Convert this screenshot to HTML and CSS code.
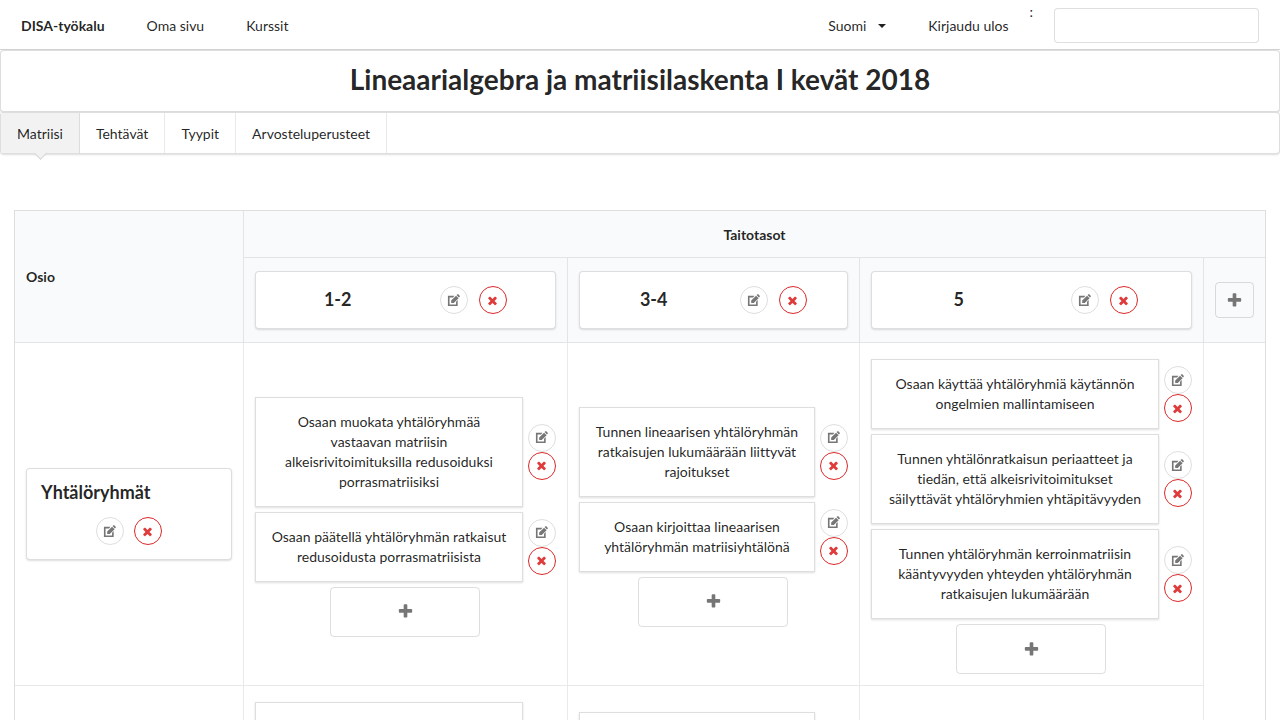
FILE: index.html
```html
<!DOCTYPE html>
<html lang="fi">
<head>
<meta charset="utf-8">
<title>DISA-työkalu</title>
<link rel="stylesheet" href="styles.css">
</head>
<body>
<svg class="sprite" aria-hidden="true">
  <symbol id="edit" viewBox="0 0 28 28"><path d="M2 4h14l-3 3.500H5.500v15h14v-6l3.500-3.500v13H2z"/><path d="M9 19.500v-5.500L19.500 3.500l5.500 5.500-10.500 10.500zM20.600 2.400l1.700-1.700q1-.8 2 0l3 3q.8 1 0 2l-1.700 1.700z"/></symbol>
  <symbol id="close" viewBox="0 0 1792 1792"><path d="M1490 1322q0 40-28 68l-136 136q-28 28-68 28t-68-28l-294-294-294 294q-28 28-68 28t-68-28l-136-136q-28-28-28-68t28-68l294-294-294-294q-28-28-28-68t28-68l136-136q28-28 68-28t68 28l294 294 294-294q28-28 68-28t68 28l136 136q28 28 28 68t-28 68l-294 294 294 294q28 28 28 68z"/></symbol>
  <symbol id="plus" viewBox="0 0 1792 1792"><path d="M1600 736v192q0 40-28 68t-68 28h-416v416q0 40-28 68t-68 28h-192q-40 0-68-28t-28-68v-416h-416q-40 0-68-28t-28-68v-192q0-40 28-68t68-28h416v-416q0-40 28-68t68-28h192q40 0 68 28t28 68v416h416q40 0 68 28t28 68z"/></symbol>
</svg>

<nav class="navbar">
  <a class="nav-item brand" href="#">DISA-työkalu</a>
  <a class="nav-item" href="#">Oma sivu</a>
  <a class="nav-item" href="#">Kurssit</a>
  <div class="nav-right">
    <button class="nav-item language" type="button">Suomi <svg class="caret" viewBox="0 0 8 4" aria-hidden="true"><path d="M0 0h8L4 4z"/></svg></button>
    <a class="nav-item" href="#">Kirjaudu ulos</a>
    <label class="user-label" for="user">:</label>
    <input class="user-input" id="user" type="text">
  </div>
</nav>

<header class="title-bar"><h1>Lineaarialgebra ja matriisilaskenta I kevät 2018</h1></header>

<nav class="tabs">
  <a class="tab active" href="#">Matriisi</a>
  <a class="tab" href="#">Tehtävät</a>
  <a class="tab" href="#">Tyypit</a>
  <a class="tab" href="#">Arvosteluperusteet</a>
</nav>

<main class="matrix-wrap">
<table class="matrix">
  <colgroup><col class="col-part"><col class="col-low"><col class="col-mid"><col class="col-high"><col class="col-add"></colgroup>
  <thead>
    <tr>
      <th class="part-head" rowspan="2">Osio</th>
      <th class="levels-head" colspan="4">Taitotasot</th>
    </tr>
    <tr>
      <th><div class="card level"><h3>1-2</h3><div class="actions"><button class="round" type="button" aria-label="Muokkaa"><svg><use href="#edit"/></svg></button><button class="round danger" type="button" aria-label="Poista"><svg><use href="#close"/></svg></button></div></div></th>
      <th><div class="card level"><h3>3-4</h3><div class="actions"><button class="round" type="button" aria-label="Muokkaa"><svg><use href="#edit"/></svg></button><button class="round danger" type="button" aria-label="Poista"><svg><use href="#close"/></svg></button></div></div></th>
      <th><div class="card level"><h3>5</h3><div class="actions"><button class="round" type="button" aria-label="Muokkaa"><svg><use href="#edit"/></svg></button><button class="round danger" type="button" aria-label="Poista"><svg><use href="#close"/></svg></button></div></div></th>
      <th><button class="add small" type="button" aria-label="Lisää"><svg><use href="#plus"/></svg></button></th>
    </tr>
  </thead>
  <tbody>
    <tr>
      <td><div class="card part"><h3>Yhtälöryhmät</h3><div class="actions"><button class="round" type="button" aria-label="Muokkaa"><svg><use href="#edit"/></svg></button><button class="round danger" type="button" aria-label="Poista"><svg><use href="#close"/></svg></button></div></div></td>
      <td>
        <div class="goal"><p class="goal-text">Osaan muokata yhtälöryhmää vastaavan matriisin alkeisrivitoimituksilla redusoiduksi porrasmatriisiksi</p><div class="stack"><button class="round" type="button" aria-label="Muokkaa"><svg><use href="#edit"/></svg></button><button class="round danger" type="button" aria-label="Poista"><svg><use href="#close"/></svg></button></div></div>
        <div class="goal"><p class="goal-text">Osaan päätellä yhtälöryhmän ratkaisut redusoidusta porrasmatriisista</p><div class="stack"><button class="round" type="button" aria-label="Muokkaa"><svg><use href="#edit"/></svg></button><button class="round danger" type="button" aria-label="Poista"><svg><use href="#close"/></svg></button></div></div>
        <button class="add" type="button" aria-label="Lisää"><svg><use href="#plus"/></svg></button>
      </td>
      <td>
        <div class="goal"><p class="goal-text">Tunnen lineaarisen yhtälöryhmän ratkaisujen lukumäärään liittyvät rajoitukset</p><div class="stack"><button class="round" type="button" aria-label="Muokkaa"><svg><use href="#edit"/></svg></button><button class="round danger" type="button" aria-label="Poista"><svg><use href="#close"/></svg></button></div></div>
        <div class="goal"><p class="goal-text">Osaan kirjoittaa lineaarisen yhtälöryhmän matriisiyhtälönä</p><div class="stack"><button class="round" type="button" aria-label="Muokkaa"><svg><use href="#edit"/></svg></button><button class="round danger" type="button" aria-label="Poista"><svg><use href="#close"/></svg></button></div></div>
        <button class="add" type="button" aria-label="Lisää"><svg><use href="#plus"/></svg></button>
      </td>
      <td>
        <div class="goal"><p class="goal-text">Osaan käyttää yhtälöryhmiä käytännön ongelmien mallintamiseen</p><div class="stack"><button class="round" type="button" aria-label="Muokkaa"><svg><use href="#edit"/></svg></button><button class="round danger" type="button" aria-label="Poista"><svg><use href="#close"/></svg></button></div></div>
        <div class="goal"><p class="goal-text">Tunnen yhtälönratkaisun periaatteet ja tiedän, että alkeisrivitoimitukset säilyttävät yhtälöryhmien yhtäpitävyyden</p><div class="stack"><button class="round" type="button" aria-label="Muokkaa"><svg><use href="#edit"/></svg></button><button class="round danger" type="button" aria-label="Poista"><svg><use href="#close"/></svg></button></div></div>
        <div class="goal"><p class="goal-text">Tunnen yhtälöryhmän kerroinmatriisin kääntyvyyden yhteyden yhtälöryhmän ratkaisujen lukumäärään</p><div class="stack"><button class="round" type="button" aria-label="Muokkaa"><svg><use href="#edit"/></svg></button><button class="round danger" type="button" aria-label="Poista"><svg><use href="#close"/></svg></button></div></div>
        <button class="add" type="button" aria-label="Lisää"><svg><use href="#plus"/></svg></button>
      </td>
      <td rowspan="2"></td>
    </tr>
    <tr>
      <td></td>
      <td><div class="goal"><div class="goal-text tall"></div><div class="stack spacer"></div></div></td>
      <td><div class="goal"><div class="goal-text"></div><div class="stack spacer"></div></div></td>
      <td></td>
    </tr>
  </tbody>
</table>
</main>
</body>
</html>
```
FILE: styles.css
```css
* { box-sizing: border-box; }

body {
  margin: 0;
  background: #fff;
  color: rgba(0, 0, 0, 0.87);
  font: 14px/20px Lato, "Liberation Sans", sans-serif;
  font-variant-ligatures: none;
}

h1, h3, p { margin: 0; }
a { color: inherit; text-decoration: none; }
button, input { font: inherit; color: inherit; }
button { cursor: pointer; }
.sprite { display: none; }

.navbar {
  display: flex;
  align-items: center;
  height: 50px;
  padding-top: 2px;
  border-bottom: 1px solid #d4d4d5;
}
.nav-item {
  padding: 0 21px;
  border: 0;
  background: none;
}
.brand { font-weight: 700; }
.nav-right {
  display: flex;
  align-items: center;
  align-self: stretch;
  margin-left: auto;
  padding-right: 21px;
}
.language { display: flex; align-items: center; gap: 12px; }
.caret { width: 8px; height: 4px; fill: currentColor; }
.user-label { align-self: flex-start; margin-right: 21px; }
.user-input {
  width: 205px;
  height: 35px;
  padding: 0 14px;
  border: 1px solid rgba(34, 36, 38, 0.15);
  border-radius: 4px;
  background: #fff;
}

.title-bar, .tabs, .card {
  border: 1px solid rgba(34, 36, 38, 0.15);
  border-radius: 4px;
  background: #fff;
  box-shadow: 0 1px 2px rgba(34, 36, 38, 0.15);
}
.title-bar { padding: 12px 14px 16px; text-align: center; }
h1 { font-size: 28px; line-height: 32px; }

.tabs { display: flex; height: 42px; }
.tab {
  position: relative;
  display: flex;
  align-items: center;
  padding: 2px 16px 0;
  border-right: 1px solid rgba(34, 36, 38, 0.1);
}
.tab.active { background: #f2f2f2; }
.tab.active::after {
  content: "";
  position: absolute;
  left: 50%;
  bottom: -5px;
  width: 8px;
  height: 8px;
  margin-left: -4px;
  transform: rotate(45deg);
  border: solid #d4d4d5;
  border-width: 0 1px 1px 0;
  background: #f2f2f2;
}

.matrix-wrap { padding: 56px 14px 14px; }
.matrix {
  width: 100%;
  table-layout: fixed;
  border: 1px solid rgba(34, 36, 38, 0.15);
  border-collapse: separate;
  border-spacing: 0;
  text-align: center;
}
.col-part { width: 18.24%; }
.col-low { width: 25.92%; }
.col-mid { width: 23.36%; }
.col-high { width: 27.52%; }
.col-add { width: 4.96%; }

th {
  padding: 13px 11px;
  border-bottom: 1px solid rgba(34, 36, 38, 0.1);
  border-left: 1px solid rgba(34, 36, 38, 0.1);
  background: #f9fafb;
}
td {
  padding: 11px;
  border-left: 1px solid rgba(34, 36, 38, 0.1);
  vertical-align: middle;
}
tr > .part-head, tbody td:first-child { border-left: 0; }
tbody tr + tr td { border-top: 1px solid rgba(34, 36, 38, 0.1); }
.part-head { text-align: left; }
.levels-head { padding: 14px 11px 12px; }

h3 { font-size: 18px; line-height: 22px; }
.card { padding: 14px; }
.level {
  display: grid;
  grid-template-columns: 1fr 1fr;
}
.level h3 { padding-top: 2px; }
.actions { display: flex; justify-content: center; gap: 10px; }
.level .actions { gap: 11px; }
.part h3 {
  margin-bottom: 16px;
  line-height: 18px;
  text-align: left;
}

.goal {
  display: flex;
  align-items: center;
  gap: 5px;
  margin-top: 5px;
}
.goal-text {
  flex: 1;
  min-width: 0;
  min-height: 70px;
  padding: 14px;
  border: 1px solid rgba(34, 36, 38, 0.15);
  background: #fff;
  box-shadow: 0 1px 2px rgba(34, 36, 38, 0.15);
}
.goal-text.tall { min-height: 90px; }
.stack { display: flex; flex-direction: column; }
.spacer { width: 28px; }

.round {
  display: flex;
  align-items: center;
  justify-content: center;
  width: 28px;
  height: 28px;
  padding: 0;
  border: 1px solid rgba(34, 36, 38, 0.15);
  border-radius: 50%;
  background: none;
  color: #767676;
}
.round.danger { border-color: #db2828; color: #e03b3b; }
.round svg { width: 13px; height: 13px; fill: currentColor; }

.add {
  display: flex;
  align-items: center;
  justify-content: center;
  width: 150px;
  height: 50px;
  margin: 5px auto 0;
  border: 1px solid rgba(34, 36, 38, 0.15);
  border-radius: 4px;
  background: none;
  color: #767676;
}
.add svg { width: 17px; height: 17px; fill: currentColor; }
.add.small { width: 100%; height: 36px; margin: 0; padding: 0; }
```
